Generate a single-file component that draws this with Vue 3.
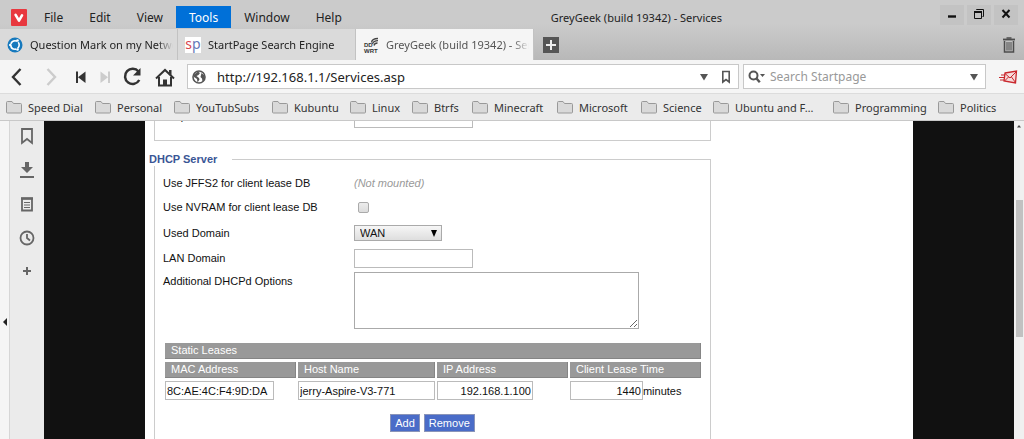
<script setup>
import { ref } from 'vue'

const menus = ['File', 'Edit', 'View', 'Tools', 'Window', 'Help']
const activeMenu = ref('Tools')
const bookmarks = [
  'Speed Dial', 'Personal', 'YouTubSubs', 'Kubuntu', 'Linux', 'Btrfs',
  'Minecraft', 'Microsoft', 'Science', 'Ubuntu and F…', 'Programming', 'Politics'
]
const url = ref('http://192.168.1.1/Services.asp')
const search = ref('')
const requestIp = ref('')
const nvram = ref(false)
const domain = ref('WAN')
const lanDomain = ref('')
const options = ref('')
const leases = ref([
  { mac: '8C:AE:4C:F4:9D:DA', host: 'jerry-Aspire-V3-771', ip: '192.168.1.100', time: '1440' }
])
function addLease() {
  leases.value.push({ mac: '', host: '', ip: '', time: '' })
}
function removeLease() {
  leases.value.pop()
}
</script>

<template>
  <div class="browser">
    <header class="chrome">
      <div class="titlebar">
        <svg class="logo" viewBox="0 0 16 17" aria-hidden="true">
          <rect width="16" height="17" rx="1" fill="#e8383f" />
          <path d="M4.6 5.8 L8 11.6 L11 6.4" fill="none" stroke="#fff" stroke-width="2.6" stroke-linecap="round" stroke-linejoin="round" />
        </svg>
        <nav class="menus">
          <button v-for="m in menus" :key="m" type="button" :class="['menu', { open: m === activeMenu }]" @click="activeMenu = m">{{ m }}</button>
        </nav>
        <div class="title">GreyGeek (build 19342) - Services</div>
        <div class="controls">
          <button type="button" aria-label="Minimize">
            <svg viewBox="0 0 24 20"><path d="M8 11.5h8" stroke="#111" stroke-width="2.4" /></svg>
          </button>
          <button type="button" aria-label="Restore">
            <svg viewBox="0 0 24 20" fill="none" stroke="#111"><path d="M7.5 7v6.5h7V7z" /><path d="M7 7h8" stroke-width="2" /><path d="M9.5 5V4.500h7V11.500h-1" /></svg>
          </button>
          <button type="button" aria-label="Close">
            <svg viewBox="0 0 24 20"><path d="M8.500 5l7 7.500M15.500 5l-7 7.500" stroke="#111" stroke-width="2" /></svg>
          </button>
        </div>
      </div>
      <div class="tabs">
        <button type="button" class="tab">
          <svg class="fav" viewBox="0 0 16 16" aria-hidden="true">
            <circle cx="8" cy="8" r="7.500" fill="#1679bd" />
            <circle cx="8" cy="8" r="4.200" fill="none" stroke="#fff" stroke-width="1.600" stroke-dasharray="7.300 1.500" stroke-dashoffset="3.600" />
            <circle cx="3.300" cy="8" r="1.300" fill="#fff" /><circle cx="10.500" cy="3.500" r="1.300" fill="#fff" /><circle cx="10.500" cy="12.500" r="1.300" fill="#fff" />
          </svg>
          <span class="tab-text">Question Mark on my Network</span>
        </button>
        <button type="button" class="tab">
          <span class="fav sp" aria-hidden="true"><b>s</b><i>p</i></span>
          <span class="tab-text">StartPage Search Engine</span>
        </button>
        <button type="button" class="tab current">
          <svg class="fav" viewBox="0 0 16 16" aria-hidden="true">
            <text x="1" y="10" class="dd">DD</text>
            <text x="1" y="15.500" class="dd">WRT</text>
            <g fill="none" stroke="#444" stroke-width="1.300"><path d="M8.500 5.500Q9 1.500 15 1.500" /><path d="M9.500 7Q10.500 3.700 15 3.700" /><path d="M11 8.500Q11.500 6 14.500 6" /></g>
          </svg>
          <span class="tab-text">GreyGeek (build 19342) - Services</span>
        </button>
        <button type="button" class="plus" aria-label="New tab">
          <svg viewBox="0 0 16 16"><path d="M8 3v10M3 8h10" stroke="#eee" stroke-width="2" /></svg>
        </button>
        <button type="button" class="trash" aria-label="Closed tabs">
          <svg viewBox="0 0 14 18" fill="none" stroke="#4c4c4c"><path d="M1 3.500h12" stroke-width="1.800" /><path d="M4.500 2h5" stroke-width="1.500" /><path d="M2.500 5v11h9V5" stroke-width="1.500" /><path d="M5 6v8.500M7 6v8.500M9 6v8.500" /></svg>
        </button>
      </div>
    </header>

    <div class="toolbar">
      <div class="nav">
        <button type="button" aria-label="Back"><svg viewBox="0 0 22 22"><path d="M14.500 3L7 11l7.500 8" fill="none" stroke="#333" stroke-width="2.400" /></svg></button>
        <button type="button" aria-label="Forward"><svg viewBox="0 0 22 22"><path d="M7.500 3l7.500 8-7.500 8" fill="none" stroke="#ccc" stroke-width="2.400" /></svg></button>
        <button type="button" aria-label="Rewind"><svg viewBox="0 0 22 22"><path d="M7 5.500v11.500" stroke="#333" stroke-width="2" /><path d="M15.500 5.500v11.500L8 11.200z" fill="#333" /></svg></button>
        <button type="button" aria-label="Fast forward"><svg viewBox="0 0 22 22"><path d="M15 5.500v11.500" stroke="#ccc" stroke-width="2" /><path d="M6.500 5.500v11.500L14 11.200z" fill="#ccc" /></svg></button>
        <button type="button" aria-label="Reload"><svg viewBox="0 0 22 22"><path d="M17.500 5.500A7.600 7.600 0 1 0 18.300 14" fill="none" stroke="#333" stroke-width="2.500" /><path d="M19.500 2v7.500h-7.500z" fill="#333" /></svg></button>
        <button type="button" aria-label="Home"><svg viewBox="0 0 22 22"><path d="M2 12.500L11 4l9 8.500" fill="none" stroke="#333" stroke-width="2" /><path d="M5 11v8.500h12V11" fill="none" stroke="#333" stroke-width="2" /><path d="M15 4h2.500v5L15 7z" fill="#333" /><path d="M9 13.500h4v6H9z" fill="#333" /></svg></button>
      </div>
      <div class="field address">
        <svg class="globe" viewBox="0 0 14 14" aria-hidden="true"><circle cx="7" cy="7" r="6" fill="#fff" stroke="#555" stroke-width="1.600" /><path d="M2 4.500L6 1.500l2 1.500-1.500 2-2 1 2.500 2 .5 1.500-2 3L5 9 2 7z" fill="#555" /><path d="M9.500 3l3 2.500V9l-2 2.500L10 8.500 8.500 7z" fill="#555" /></svg>
        <input v-model="url" type="text" aria-label="Address" />
        <svg class="caret" viewBox="0 0 8 8" aria-hidden="true"><path d="M0 1h8L4 7.500z" fill="#555" /></svg>
        <svg class="mark" viewBox="0 0 10 14" aria-hidden="true"><path d="M1.800 1.500h6.400v10.500L5 9.500l-3.200 2.500z" fill="none" stroke="#555" stroke-width="1.600" /></svg>
      </div>
      <div class="field searchbox">
        <svg class="lens" viewBox="0 0 18 14" aria-hidden="true"><circle cx="5.500" cy="5.500" r="4" fill="none" stroke="#555" stroke-width="2" /><path d="M8.300 8.300l3.500 4" stroke="#555" stroke-width="2.400" /><path d="M12 4h5l-2.500 3z" fill="#555" /></svg>
        <input v-model="search" type="text" placeholder="Search Startpage" aria-label="Search Startpage" />
        <svg class="caret" viewBox="0 0 8 8" aria-hidden="true"><path d="M0 1h8L4 7.500z" fill="#555" /></svg>
      </div>
      <button type="button" class="mail" aria-label="Mail">
        <svg viewBox="0 0 20 14"><path d="M7 3L18.500 1l-1 12L6 11z" fill="#f6dada" stroke="#c9272d" stroke-width="1.300" /><path d="M7 3.500l5 4.500 6-6M6.500 11l4-4M17.500 12.500L13.500 7" fill="none" stroke="#c9272d" /><path d="M3 5h4M1 7.500h6M2 10h4" stroke="#c9272d" stroke-width="1.200" /></svg>
      </button>
    </div>

    <nav class="bookmarks">
      <a v-for="b in bookmarks" :key="b" href="#">
        <svg viewBox="0 0 16 13" aria-hidden="true"><path d="M.5 11V1.500q0-1 1-1H6l1.500 2h7q1 0 1 1V11q0 1-1 1h-13q-1 0-1-1z" fill="#d9d9d9" stroke="#999" /></svg>
        <span>{{ b }}</span>
      </a>
    </nav>

    <div class="body">
      <button type="button" class="edge" aria-label="Toggle panel"><svg viewBox="0 0 4 8"><path d="M4 0v8L0 4z" fill="#222" /></svg></button>
      <aside class="panel">
        <button type="button" aria-label="Bookmarks"><svg viewBox="0 0 16 18"><path d="M3 2h10v14l-5-4-5 4z" fill="none" stroke="#666" stroke-width="1.800" /></svg></button>
        <button type="button" aria-label="Downloads"><svg viewBox="0 0 16 18"><path d="M6 1h4v5h4L8 12 2 6h4z" fill="#666" /><path d="M1 16h14" stroke="#666" stroke-width="2" /></svg></button>
        <button type="button" aria-label="Notes"><svg viewBox="0 0 16 18"><path d="M3 3.500h10v12H3z" fill="none" stroke="#666" stroke-width="1.800" /><path d="M2 3.500h12" stroke="#666" stroke-width="2.400" /><path d="M5 7.500h6M5 10h6M5 12.500h6" stroke="#666" /></svg></button>
        <button type="button" aria-label="History"><svg viewBox="0 0 16 18"><circle cx="8" cy="9" r="6.500" fill="none" stroke="#666" stroke-width="1.800" /><path d="M8 5v4l3 2.500" fill="none" stroke="#666" stroke-width="1.800" /></svg></button>
        <button type="button" aria-label="Add web panel"><svg viewBox="0 0 16 18"><path d="M8 4v8M4 8h8" stroke="#666" stroke-width="2" /></svg></button>
      </aside>

      <main class="viewport">
        <div class="page">
          <fieldset class="client">
            <div class="row">
              <label for="request-ip">Request IP</label>
              <input id="request-ip" v-model="requestIp" type="text" class="box medium" />
            </div>
          </fieldset>

          <fieldset class="server">
            <legend>DHCP Server</legend>
            <div class="row">
              <span>Use JFFS2 for client lease DB</span>
              <em>(Not mounted)</em>
            </div>
            <div class="row">
              <label for="nvram">Use NVRAM for client lease DB</label>
              <input id="nvram" v-model="nvram" type="checkbox" />
            </div>
            <div class="row tall">
              <label for="domain">Used Domain</label>
              <span class="select">
                <select id="domain" v-model="domain">
                  <option>WAN</option>
                  <option>LAN &amp; WLAN</option>
                </select>
                <svg viewBox="0 0 6 7" aria-hidden="true"><path d="M0 0h6L3 7z" fill="#000" /></svg>
              </span>
            </div>
            <div class="row">
              <label for="lan">LAN Domain</label>
              <input id="lan" v-model="lanDomain" type="text" class="box medium" />
            </div>
            <div class="row area">
              <label for="options">Additional DHCPd Options</label>
              <textarea id="options" v-model="options"></textarea>
            </div>

            <table>
              <colgroup><col class="c-mac" /><col class="c-host" /><col class="c-ip" /><col class="c-time" /></colgroup>
              <thead>
                <tr><th colspan="4">Static Leases</th></tr>
                <tr><th>MAC Address</th><th>Host Name</th><th>IP Address</th><th>Client Lease Time</th></tr>
              </thead>
              <tbody>
                <tr v-for="(l, i) in leases" :key="i">
                  <td><input v-model="l.mac" type="text" class="box mac" aria-label="MAC Address" /></td>
                  <td><input v-model="l.host" type="text" class="box host" aria-label="Host Name" /></td>
                  <td><input v-model="l.ip" type="text" class="box ip" aria-label="IP Address" /></td>
                  <td><div class="time"><input v-model="l.time" type="text" class="box" aria-label="Client Lease Time" /><span>minutes</span></div></td>
                </tr>
              </tbody>
            </table>

            <div class="actions">
              <button type="button" @click="addLease">Add</button>
              <button type="button" @click="removeLease">Remove</button>
            </div>
          </fieldset>
        </div>
      </main>

      <div class="scrollbar" aria-hidden="true">
        <svg viewBox="0 0 6 4"><path d="M1 3.500h4L3 1z" fill="#444" /></svg>
        <div class="thumb"></div>
      </div>
    </div>
  </div>
</template>

<style>
html,
body {
  overflow: hidden;
}
</style>

<style scoped>
* {
  box-sizing: border-box;
}
button,
input,
select,
textarea {
  font: inherit;
  color: inherit;
  margin: 0;
}
button {
  border: 0;
  padding: 0;
  background: none;
}
svg {
  display: block;
  flex: none;
}
.browser {
  display: flex;
  flex-direction: column;
  height: 100vh;
  font-family: "Noto Sans", "Open Sans", sans-serif;
  font-size: 11px;
  color: #222;
  background: #ebebeb;
}

/* title bar and tabs */
.chrome {
  flex: none;
  background: linear-gradient(#cbcbcb 0 24px, #b8b8b8);
}
.titlebar {
  display: flex;
  height: 29px;
  padding-left: 11px;
}
.logo {
  width: 16px;
  height: 17px;
  margin-top: 9px;
}
.menus {
  display: flex;
  padding: 6px 0 1px 4px;
  font-size: 12px;
}
.menu {
  padding: 0 13px;
}
.menu.open {
  background: #0070d8;
  color: #fff;
}
.title {
  flex: 1;
  padding: 6px 22px 0 0;
  line-height: 24px;
  text-align: center;
}
.controls {
  display: flex;
  gap: 3px;
  padding: 5px 6px 0 0;
}
.controls button {
  width: 24px;
  height: 20px;
  background: #c3c3c3;
}
.controls svg {
  width: 24px;
  height: 20px;
}
.tabs {
  display: flex;
  align-items: center;
  height: 31px;
}
.tab {
  display: flex;
  align-items: center;
  gap: 7px;
  width: 178px;
  height: 31px;
  padding: 0 4px 0 7px;
  background: #dadada;
  border-right: 1px solid #c2c2c2;
  text-align: left;
}
.tab.current {
  background: #f5f5f5;
  color: #555;
}
.fav {
  flex: none;
  width: 16px;
  height: 16px;
}
.sp {
  background: #fff;
  font-size: 14px;
  line-height: 13px;
  text-align: center;
}
.sp b {
  color: #d8454d;
  font-weight: 400;
}
.sp i {
  color: #6678b8;
  font-style: normal;
}
.dd {
  font: 700 6px "Liberation Sans", sans-serif;
  fill: #333;
}
.tab-text {
  flex: 1;
  overflow: hidden;
  white-space: nowrap;
  -webkit-mask-image: linear-gradient(to right, #000 calc(100% - 16px), transparent);
  mask-image: linear-gradient(to right, #000 calc(100% - 16px), transparent);
}
.plus {
  width: 16px;
  height: 16px;
  margin-left: 9px;
  background: #555;
}
.trash {
  margin: 0 8px 0 auto;
}
.trash svg {
  width: 14px;
  height: 18px;
}

/* navigation */
.toolbar {
  display: flex;
  flex: none;
  align-items: center;
  height: 33px;
  padding: 0 6px 0 5px;
  background: #f5f5f5;
  font-size: 12px;
}
.nav {
  display: grid;
  grid-template-columns: 23px 46px 13px 35px 20px 45px;
  justify-items: center;
  flex: none;
}
.nav svg {
  width: 22px;
  height: 22px;
}
.field {
  display: flex;
  align-items: center;
  height: 25px;
  border: 1px solid #c8c8c8;
  background: #fff;
}
.field input {
  flex: 1;
  min-width: 0;
  padding: 0;
  border: 0;
  outline: 0;
  background: none;
}
.address {
  flex: 1;
  padding: 0 7px 0 4px;
}
.address input {
  font-size: 13px;
}
.globe {
  width: 14px;
  height: 14px;
  margin-right: 11px;
}
.caret {
  width: 8px;
  height: 8px;
}
.mark {
  width: 10px;
  height: 14px;
  margin-left: 13px;
}
.searchbox {
  width: 243px;
  margin-left: 4px;
  padding: 0 7px 0 4px;
}
.searchbox input::placeholder {
  color: #999;
  opacity: 1;
}
.lens {
  width: 18px;
  height: 14px;
  margin-right: 4px;
}
.mail {
  margin-left: 12px;
}
.mail svg {
  width: 20px;
  height: 14px;
}

/* bookmarks */
.bookmarks {
  display: grid;
  grid-template-columns: 89fr 79fr 98fr 78fr 62fr 60fr 85fr 84fr 72fr 120fr 105fr 86fr;
  flex: none;
  height: 28px;
  padding-left: 6px;
  border-top: 1px solid #dcdcdc;
  border-bottom: 1px solid #c8c8c8;
  background: #ebebeb;
}
.bookmarks a {
  display: flex;
  align-items: center;
  gap: 6px;
  min-width: 0;
  color: #333;
  text-decoration: none;
  white-space: nowrap;
}
.bookmarks svg {
  width: 16px;
  height: 13px;
}

/* content area */
.body {
  display: flex;
  flex: 1;
  min-height: 0;
}
.edge {
  display: flex;
  align-items: center;
  justify-content: flex-end;
  width: 10px;
  padding: 84px 2px 0 0;
  border-right: 1px solid #d6d6d6;
  background: #f5f5f5;
}
.edge svg {
  width: 4px;
  height: 8px;
}
.panel {
  display: flex;
  flex-direction: column;
  align-items: center;
  gap: 16px;
  width: 34px;
  padding-top: 6px;
}
.panel svg {
  width: 16px;
  height: 18px;
}
.viewport {
  display: flex;
  flex: 1;
  justify-content: center;
  overflow: hidden;
  background: #111;
}
.page {
  width: 768px;
  padding-left: 9px;
  background: #fff;
  font-family: "Liberation Sans", Arial, sans-serif;
  font-size: 11px;
  color: #111;
}
fieldset {
  width: 557px;
  min-width: 0;
  margin: 0;
  padding: 0 8px;
  border: 1px solid #ccc;
}
.client {
  margin-top: -16px;
  padding-bottom: 10px;
}
.client label {
  padding-bottom: 4px;
}
.server {
  margin-top: 11px;
  padding-top: 5px;
  padding-bottom: 40px;
}
legend {
  width: 83px;
  margin-left: -14px;
  padding: 0;
  background: #fff;
  color: #3a5695;
  font-weight: 700;
  line-height: 14px;
}
.row {
  display: grid;
  grid-template-columns: 191px 1fr;
  align-items: center;
  min-height: 24px;
}
.row.tall {
  min-height: 27px;
}
.row em {
  color: #999;
}
.row input[type="checkbox"] {
  width: 11px;
  height: 11px;
  margin-left: 4px;
  appearance: none;
  border: 1px solid #aaa;
  border-radius: 2px;
  background: linear-gradient(#ececec, #dcdcdc);
}
.row input[type="checkbox"]:checked {
  background: #4a6cc0;
}
.box {
  display: block;
  height: 19px;
  padding: 0 1px;
  border: 1px solid #bbb;
  background: #fff;
}
.medium {
  width: 119px;
}
.select {
  position: relative;
  width: 88px;
}
.select select {
  display: block;
  width: 100%;
  height: 16px;
  padding: 0 5px;
  appearance: none;
  border: 1px solid #aaa;
  border-radius: 0;
  background: linear-gradient(#f6f6f6, #dedede);
}
.select svg {
  position: absolute;
  top: 5px;
  right: 5px;
  width: 6px;
  height: 7px;
  pointer-events: none;
}
.area {
  align-items: start;
  padding-top: 2px;
}
.area label {
  padding-top: 3px;
}
textarea {
  display: block;
  width: 285px;
  height: 57px;
  border: 1px solid #aaa;
  background: #fff;
}
table {
  width: 540px;
  margin-top: 11px;
  table-layout: fixed;
  border-spacing: 2px 3px;
}
.c-mac,
.c-ip,
.c-time {
  width: 131px;
}
th {
  height: 16px;
  padding: 0 6px;
  border-right: 1px solid #858585;
  border-bottom: 1px solid #858585;
  background: #999;
  color: #fff;
  font-weight: 400;
  line-height: 15px;
  text-align: left;
}
td {
  padding: 0;
}
.mac {
  width: 109px;
}
.host {
  width: 100%;
}
.ip {
  width: 96px;
  text-align: right;
}
.time {
  display: flex;
  align-items: center;
}
.time input {
  width: 73px;
  text-align: right;
}
.actions {
  display: flex;
  justify-content: center;
  gap: 4px;
  margin-top: 11px;
}
.actions button {
  height: 18px;
  padding: 0 4px;
  border: 1px solid #8a94b8;
  background: #4a6cc8;
  color: #fff;
}

/* scrollbar */
.scrollbar {
  display: flex;
  flex-direction: column;
  align-items: center;
  width: 10px;
  background: #f0f0f0;
}
.scrollbar svg {
  width: 6px;
  height: 4px;
  margin-top: 3px;
}
.thumb {
  width: 7px;
  height: 43%;
  margin-top: 72px;
  background: #c1c1c1;
}
</style>
